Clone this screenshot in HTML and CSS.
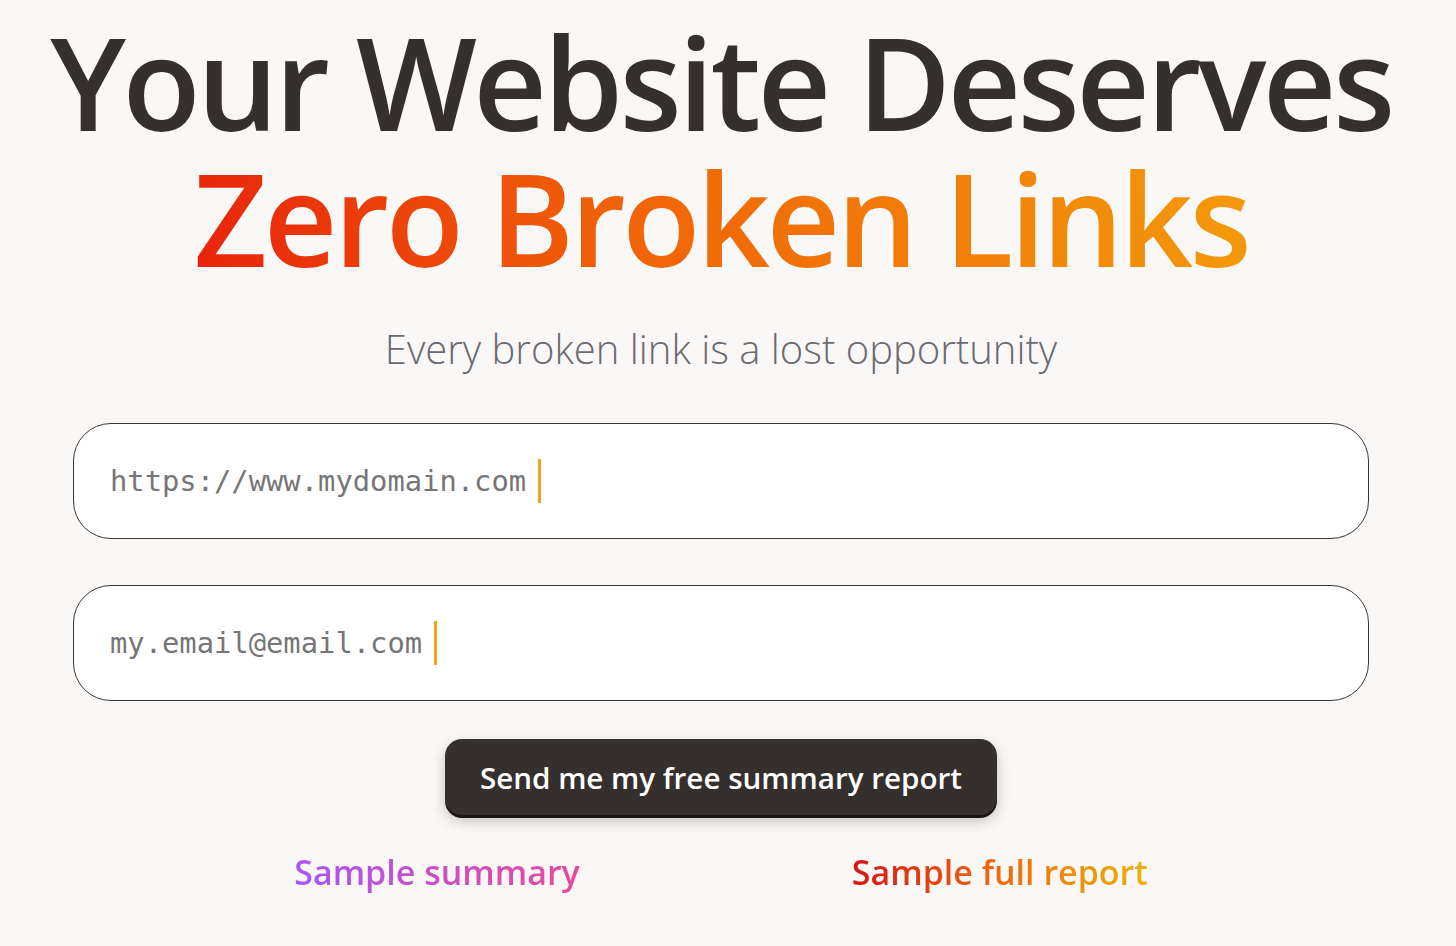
FILE: index.html
```html
<!DOCTYPE html>
<html lang="en">
<head>
    <meta charset="UTF-8">
    <title>Zero Broken Links</title>
    <link rel="stylesheet" href="styles.css">
</head>
<body>
    <div class="page">
        <h1 class="headline">
            <span class="line">Your Website Deserves</span>
            <span class="line accent">Zero Broken Links</span>
        </h1>
        <p class="subtitle">Every broken link is a lost opportunity</p>

        <form class="check-form">
            <div class="field">
                <span class="placeholder">https://www.mydomain.com</span>
                <span class="caret"></span>
            </div>
            <div class="field">
                <span class="placeholder">my.email@email.com</span>
                <span class="caret"></span>
            </div>
            <button type="button" class="send-btn">Send me my free summary report</button>
        </form>

        <div class="samples">
            <a href="#" class="sample sample-summary">Sample summary</a>
            <a href="#" class="sample sample-full">Sample full report</a>
        </div>
    </div>
</body>
</html>
```

FILE: styles.css
```css
body {
    margin: 0;
    background-color: #faf8f6;
    font-family: "Open Sans", "Noto Sans", sans-serif;
    color: #35302d;
}
.page {
    width: 1442px;
    padding-top: 14px;
}
.headline {
    margin: 0;
    text-align: center;
    font-size: 128px;
    font-weight: 600;
    line-height: 136px;
    letter-spacing: -3.6px;
    white-space: nowrap;
}
.line {
    display: block;
}
.accent {
    display: inline-block;
    background: linear-gradient(80deg, #e8230c 0%, #f06208 40%, #f39a0b 100%);
    -webkit-background-clip: text;
    background-clip: text;
    color: transparent;
}
.subtitle {
    margin: 35px 0 0;
    text-align: center;
    font-size: 40px;
    font-weight: 300;
    color: #6b6a72;
}
.check-form {
    display: flex;
    flex-direction: column;
    align-items: center;
    gap: 46px;
    width: 1296px;
    margin: 47px auto 0;
}
.field {
    display: flex;
    align-items: center;
    box-sizing: border-box;
    width: 100%;
    height: 116px;
    padding: 0 36px;
    background-color: #fff;
    border: 1px solid #3a3633;
    border-radius: 38px;
    font-family: "DejaVu Sans Mono", monospace;
    font-size: 28.8px;
    color: #767676;
}
.caret {
    display: inline-block;
    width: 3px;
    height: 44px;
    margin-left: 12px;
    background-color: #efa41e;
}
.send-btn {
    margin-top: -8px;
    padding: 0 35px;
    height: 76px;
    border: none;
    border-radius: 17px;
    background-color: #35302d;
    color: #fff;
    font-family: "Open Sans", "Noto Sans", sans-serif;
    font-size: 29.6px;
    font-weight: 600;
    box-shadow: 0 3px 0 #1b1613, 0 6px 14px rgba(0, 0, 0, 0.22);
    cursor: pointer;
}
.samples {
    display: flex;
    justify-content: center;
    gap: 272px;
    margin-top: 34px;
}
.sample {
    font-size: 34px;
    font-weight: 600;
    text-decoration: none;
    -webkit-background-clip: text;
    background-clip: text;
    color: transparent;
}
.sample-summary {
    background-image: linear-gradient(90deg, #a855f7, #ec4899);
}
.sample-full {
    background-image: linear-gradient(90deg, #d81414, #f06a0c 50%, #eab308);
}
```
